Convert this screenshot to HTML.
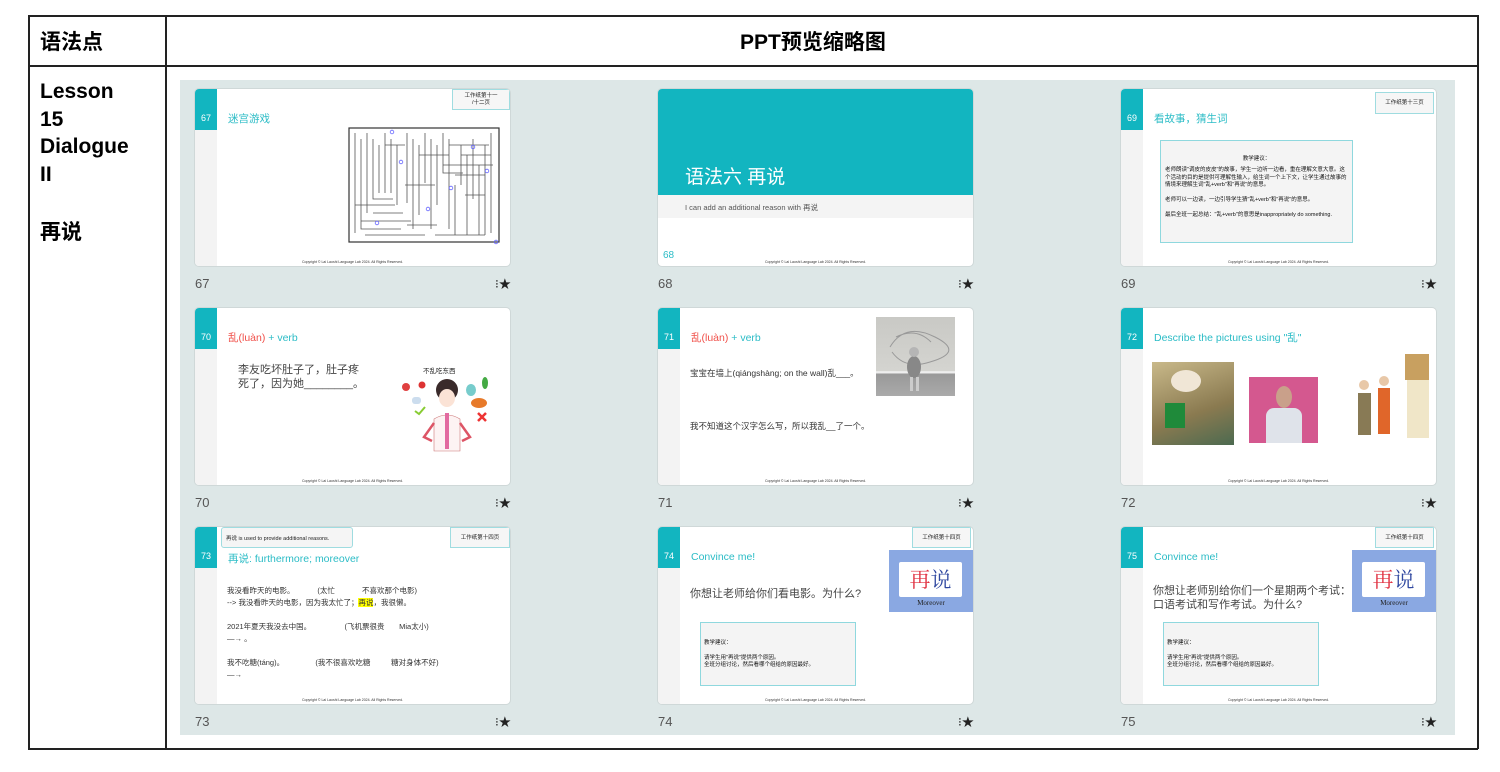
<!DOCTYPE html>
<html><head><meta charset="utf-8"><style>
*{margin:0;padding:0;box-sizing:border-box}
body{width:1500px;height:772px;background:#fff;position:relative;overflow:hidden;font-family:"Liberation Sans","Noto Sans CJK SC",sans-serif;color:#000}
.a{position:absolute}
.line{position:absolute;background:#222}
.panel{position:absolute;left:180px;top:80px;width:1275px;height:655px;background:#dde7e7}
.s{position:absolute;width:315px;height:177px;background:#fff;border-radius:4px;overflow:hidden;box-shadow:0 0 0 1px #cfd8d8}
.sb{position:absolute;left:0;top:0;width:22px;height:177px;background:#f3f3f3}
.nb{position:absolute;left:0;top:0;width:22px;height:41px;background:#12b5c0;color:#fff;font-size:9px;padding-top:24px;text-align:center}
.tt{position:absolute;left:33px;top:22px;font-size:10.5px;color:#2bbcc6;white-space:nowrap}
.cp{position:absolute;left:0;width:315px;top:171px;text-align:center;font-size:3.5px;color:#333}
.bd{position:absolute;background:#f6f6f6;border:1px solid #9fdce0;font-size:5.5px;color:#222;text-align:center;line-height:1.25}
.num{position:absolute;font-size:13px;color:#555}
.st{position:absolute;font-size:12px;color:#222}
.tx{position:absolute;font-size:8.5px;color:#333;white-space:nowrap}
.tb{position:absolute;background:#f4f4f4;border:1px solid #8fd8de;font-size:5.5px;color:#111;line-height:1.35}
</style></head><body>
<div class="line" style="left:28px;top:15px;width:1450px;height:1.5px"></div>
<div class="line" style="left:28px;top:65px;width:1450px;height:1.5px"></div>
<div class="line" style="left:28px;top:748px;width:1450px;height:1.5px"></div>
<div class="line" style="left:28px;top:15px;width:1.5px;height:734px"></div>
<div class="line" style="left:165px;top:15px;width:1.5px;height:734px"></div>
<div class="line" style="left:1477px;top:15px;width:1.5px;height:734px"></div>
<div class="a" style="left:40px;top:26px;font-size:21px;font-weight:bold">语法点</div>
<div class="a" style="left:740px;top:26px;font-size:21px;font-weight:bold">PPT预览缩略图</div>
<div class="a" style="left:40px;top:78px;font-size:21px;font-weight:bold;line-height:27.5px">Lesson<br>15<br>Dialogue<br>II</div>
<div class="a" style="left:40px;top:216px;font-size:21px;font-weight:bold">再说</div>

<div class="panel"></div>

<!-- 67 -->
<div class="s" style="left:195px;top:89px">
<div class="sb"></div><div class="nb">67</div><div class="tt">迷宫游戏</div>
<div class="bd" style="left:257px;top:0;width:58px;height:21px;padding-top:3px">工作纸第十一<br>/十二页</div>
<svg class="a" style="left:150px;top:36px" width="160" height="120" viewBox="0 0 160 120" fill="none" stroke="#555" stroke-width="0.8">
<rect x="4" y="3" width="150" height="114" stroke="#333" stroke-width="1.2"/>
<path d="M10 8v100M16 14v90h40M22 8v80M28 14v60h20M34 20v48M40 8v60M46 14v54M52 20v60M62 8v70M68 14v90M74 20v70M80 8v50M86 14v90M92 20v60M98 8v40h20M104 14v90M110 60v50M116 20v40M122 30v80M128 14v60M134 40v70M140 20v90M146 8v100"/>
<path d="M10 80h40M16 96h50M28 88h30M62 100h30M74 30h30M98 40h50M110 50h30M120 70h20M90 110h50M40 20h20M104 20h40M116 30h30M60 60h30M20 110h60"/>
<circle cx="47" cy="7" r="1.8" stroke="#66f"/><circle cx="56" cy="37" r="1.8" stroke="#66f"/><circle cx="83" cy="84" r="1.8" stroke="#66f"/><circle cx="128" cy="22" r="1.8" stroke="#66f"/><circle cx="106" cy="63" r="1.8" stroke="#66f"/><circle cx="32" cy="98" r="1.8" stroke="#66f"/><circle cx="142" cy="46" r="1.8" stroke="#66f"/><circle cx="151" cy="117" r="1.8" stroke="#66f"/>
</svg>
<div class="cp">Copyright © Lai Laoshi Language Lab 2024. All Rights Reserved.</div>
</div>
<div class="num" style="left:195px;top:276px">67</div><div class="st" style="left:495px;top:275px">⁝★</div>

<!-- 68 -->
<div class="s" style="left:658px;top:89px">
<div class="a" style="left:0;top:0;width:315px;height:106px;background:#12b5c0"></div>
<div class="a" style="left:0;top:106px;width:315px;height:23px;background:#f4f4f4"></div>
<div class="a" style="left:27px;top:73px;font-size:19px;color:#fff">语法六 再说</div>
<div class="a" style="left:27px;top:113px;font-size:7.5px;color:#555">I can add an additional reason with 再说</div>
<div class="a" style="left:5px;top:161px;font-size:10px;color:#2bbcc6">68</div>
<div class="cp">Copyright © Lai Laoshi Language Lab 2024. All Rights Reserved.</div>
</div>
<div class="num" style="left:658px;top:276px">68</div><div class="st" style="left:958px;top:275px">⁝★</div>

<!-- 69 -->
<div class="s" style="left:1121px;top:89px">
<div class="sb"></div><div class="nb">69</div><div class="tt">看故事，猜生词</div>
<div class="bd" style="left:254px;top:3px;width:59px;height:22px;padding-top:7px">工作纸第十三页</div>
<div class="tb" style="left:39px;top:51px;width:193px;height:103px;padding:15px 4px 0">
<div style="text-align:center;margin-bottom:4px">教学建议：</div>
老师朗读"调皮的皮皮"的故事，学生一边听一边看，重在理解文意大意。这个活动的目的是提供可理解性输入，给生词一个上下文，让学生通过故事的情境来理解生词"乱+verb"和"再说"的意思。<br><br>老师可以一边读，一边引导学生猜"乱+verb"和"再说"的意思。<br><br>最后全班一起总结："乱+verb"的意思是inappropriately do something.</div>
<div class="cp">Copyright © Lai Laoshi Language Lab 2024. All Rights Reserved.</div>
</div>
<div class="num" style="left:1121px;top:276px">69</div><div class="st" style="left:1421px;top:275px">⁝★</div>

<!-- 70 -->
<div class="s" style="left:195px;top:308px">
<div class="sb"></div><div class="nb">70</div><div class="tt"><span style="color:#f0504a">乱(luàn)</span> + verb</div>
<div class="a" style="left:43px;top:56px;font-size:11px;color:#444;line-height:13.5px">李友吃坏肚子了，肚子疼<br>死了，因为她________。</div>
<div class="a" style="left:228px;top:57px;font-size:6.5px;color:#222">不乱吃东西</div>
<svg class="a" style="left:205px;top:65px" width="95" height="80" viewBox="0 0 95 80">
<circle cx="6" cy="14" r="4" fill="#e04040"/><circle cx="22" cy="12" r="3.5" fill="#d33"/>
<rect x="12" y="24" width="9" height="7" rx="3" fill="#cde"/><path d="M15 38l4 3 6-7" stroke="#8c3" stroke-width="2" fill="none"/>
<ellipse cx="71" cy="17" rx="5" ry="6" fill="#7cc"/><ellipse cx="85" cy="10" rx="3" ry="6" fill="#4a4"/><ellipse cx="79" cy="30" rx="8" ry="5" fill="#e77a2a"/>
<path d="M78 40l8 8M86 40l-8 8" stroke="#e33" stroke-width="2.5"/>
<circle cx="47" cy="17" r="11" fill="#3a2a2a"/><ellipse cx="47" cy="25" rx="8" ry="9" fill="#fbe3d6"/>
<path d="M34 78V46q13-8 26 0v32z" fill="#fdf3f3" stroke="#c77" stroke-width="0.6"/><rect x="45" y="40" width="4" height="36" fill="#e26aa0"/>
<path d="M34 50l-10 14 8 4M60 50l10 14-8 4" stroke="#d56" stroke-width="2.5" fill="none"/>
</svg>
<div class="cp">Copyright © Lai Laoshi Language Lab 2024. All Rights Reserved.</div>
</div>
<div class="num" style="left:195px;top:495px">70</div><div class="st" style="left:495px;top:494px">⁝★</div>

<!-- 71 -->
<div class="s" style="left:658px;top:308px">
<div class="sb"></div><div class="nb">71</div><div class="tt"><span style="color:#f0504a">乱(luàn)</span> + verb</div>
<div class="a" style="left:218px;top:9px;width:79px;height:79px;background:linear-gradient(#c9c9c5 0%,#d4d4d0 68%,#eee 69%,#eee 71%,#999 72%,#aaa 100%)"></div>
<svg class="a" style="left:218px;top:9px" width="79" height="79"><path d="M14 30q15-25 45-10t-5 25q-25 8-38-10M20 20q20-10 35 5" stroke="#999" fill="none"/><ellipse cx="38" cy="50" rx="7" ry="11" fill="#888"/><circle cx="38" cy="35" r="5" fill="#b5b5b5"/><rect x="34" y="60" width="3" height="14" fill="#ccc"/><rect x="40" y="60" width="3" height="14" fill="#ccc"/></svg>
<div class="tx" style="left:32px;top:59px">宝宝在墙上(qiángshàng; on the wall)乱___。</div>
<div class="tx" style="left:32px;top:112px">我不知道这个汉字怎么写，所以我乱__了一个。</div>
<div class="cp">Copyright © Lai Laoshi Language Lab 2024. All Rights Reserved.</div>
</div>
<div class="num" style="left:658px;top:495px">71</div><div class="st" style="left:958px;top:494px">⁝★</div>

<!-- 72 -->
<div class="s" style="left:1121px;top:308px">
<div class="sb"></div><div class="nb">72</div><div class="tt">Describe the pictures using "乱"</div>
<div class="a" style="left:31px;top:54px;width:82px;height:83px;background:linear-gradient(160deg,#c9b98a,#8a7a50 60%,#4c6a50)"></div>
<div class="a" style="left:44px;top:95px;width:20px;height:25px;background:#1f8a3a"></div>
<div class="a" style="left:50px;top:62px;width:30px;height:22px;border-radius:50%;background:#f0e6d6"></div>
<div class="a" style="left:128px;top:69px;width:69px;height:66px;background:#d4588f"></div>
<div class="a" style="left:145px;top:100px;width:36px;height:35px;background:#dfe3ea;border-radius:8px 8px 0 0"></div>
<div class="a" style="left:155px;top:78px;width:16px;height:22px;background:#c9a08a;border-radius:50%"></div>
<div class="a" style="left:284px;top:46px;width:24px;height:26px;background:#c8a060"></div>
<div class="a" style="left:286px;top:72px;width:22px;height:58px;background:#f0e6c8"></div>
<div class="a" style="left:238px;top:72px;width:10px;height:10px;border-radius:50%;background:#e8c8a8"></div>
<div class="a" style="left:258px;top:68px;width:10px;height:10px;border-radius:50%;background:#e8c8a8"></div>
<div class="a" style="left:237px;top:85px;width:13px;height:42px;background:#887a55"></div>
<div class="a" style="left:257px;top:80px;width:12px;height:46px;background:#e0662a"></div>
<div class="cp">Copyright © Lai Laoshi Language Lab 2024. All Rights Reserved.</div>
</div>
<div class="num" style="left:1121px;top:495px">72</div><div class="st" style="left:1421px;top:494px">⁝★</div>

<!-- 73 -->
<div class="s" style="left:195px;top:527px">
<div class="sb"></div><div class="nb">73</div>
<div class="a" style="left:26px;top:0;width:132px;height:21px;background:#f5f5f5;border:1px solid #9fdce0;border-radius:3px;font-size:5.5px;padding:6px 0 0 4px;color:#222">再说 is used to provide additional reasons.</div>
<div class="bd" style="left:255px;top:0;width:60px;height:21px;padding-top:7px">工作纸第十四页</div>
<div class="tt" style="top:24px">再说: furthermore; moreover</div>
<div class="tx" style="font-size:7.5px;left:32px;top:58px;line-height:12px">我没看昨天的电影。&nbsp;&nbsp;&nbsp;&nbsp;&nbsp;&nbsp;&nbsp;&nbsp;&nbsp;&nbsp;&nbsp;(太忙&nbsp;&nbsp;&nbsp;&nbsp;&nbsp;&nbsp;&nbsp;&nbsp;&nbsp;&nbsp;&nbsp;&nbsp;&nbsp;不喜欢那个电影)<br>--&gt; 我没看昨天的电影，因为我太忙了；<span style="background:#ff0">再说</span>，我很懒。</div>
<div class="tx" style="font-size:7.5px;left:32px;top:94px;line-height:12px">2021年夏天我没去中国。&nbsp;&nbsp;&nbsp;&nbsp;&nbsp;&nbsp;&nbsp;&nbsp;&nbsp;&nbsp;&nbsp;&nbsp;&nbsp;&nbsp;&nbsp;&nbsp;(飞机票很贵&nbsp;&nbsp;&nbsp;&nbsp;&nbsp;&nbsp;&nbsp;Mia太小)<br>—→ 。</div>
<div class="tx" style="font-size:7.5px;left:32px;top:130px;line-height:12px">我不吃糖(táng)。&nbsp;&nbsp;&nbsp;&nbsp;&nbsp;&nbsp;&nbsp;&nbsp;&nbsp;&nbsp;&nbsp;&nbsp;&nbsp;&nbsp;&nbsp;(我不很喜欢吃糖&nbsp;&nbsp;&nbsp;&nbsp;&nbsp;&nbsp;&nbsp;&nbsp;&nbsp;&nbsp;糖对身体不好)<br>—→</div>
<div class="cp">Copyright © Lai Laoshi Language Lab 2024. All Rights Reserved.</div>
</div>
<div class="num" style="left:195px;top:714px">73</div><div class="st" style="left:495px;top:713px">⁝★</div>

<!-- 74 -->
<div class="s" style="left:658px;top:527px">
<div class="sb"></div><div class="nb">74</div><div class="tt" style="top:24px">Convince me!</div>
<div class="bd" style="left:254px;top:0;width:59px;height:21px;padding-top:7px">工作纸第十四页</div>
<div class="a" style="left:231px;top:23px;width:84px;height:62px;background:#8aa8e2"></div>
<div class="a" style="left:241px;top:35px;width:63px;height:35px;background:#fff;border-radius:2px;font-family:'Noto Serif CJK SC',serif;font-size:21px;line-height:35px;text-align:center"><span style="color:#e03040">再</span><span style="color:#3048a0">说</span></div>
<div class="a" style="left:231px;top:72px;width:84px;text-align:center;font-family:'Liberation Serif',serif;font-size:7px;color:#222">Moreover</div>
<div class="a" style="left:32px;top:58px;font-size:11px;color:#444">你想让老师给你们看电影。为什么?</div>
<div class="tb" style="left:42px;top:95px;width:156px;height:64px;padding:17px 3px 0">教学建议：<br><br>请学生用"再说"提供两个原因。<br>全班分组讨论，然后看哪个组给的原因最好。</div>
<div class="cp">Copyright © Lai Laoshi Language Lab 2024. All Rights Reserved.</div>
</div>
<div class="num" style="left:658px;top:714px">74</div><div class="st" style="left:958px;top:713px">⁝★</div>

<!-- 75 -->
<div class="s" style="left:1121px;top:527px">
<div class="sb"></div><div class="nb">75</div><div class="tt" style="top:24px">Convince me!</div>
<div class="bd" style="left:254px;top:0;width:59px;height:21px;padding-top:7px">工作纸第十四页</div>
<div class="a" style="left:231px;top:23px;width:84px;height:62px;background:#8aa8e2"></div>
<div class="a" style="left:241px;top:35px;width:63px;height:35px;background:#fff;border-radius:2px;font-family:'Noto Serif CJK SC',serif;font-size:21px;line-height:35px;text-align:center"><span style="color:#e03040">再</span><span style="color:#3048a0">说</span></div>
<div class="a" style="left:231px;top:72px;width:84px;text-align:center;font-family:'Liberation Serif',serif;font-size:7px;color:#222">Moreover</div>
<div class="a" style="left:32px;top:58px;font-size:11px;color:#444;line-height:13.5px">你想让老师别给你们一个星期两个考试：<br>口语考试和写作考试。为什么?</div>
<div class="tb" style="left:42px;top:95px;width:156px;height:64px;padding:17px 3px 0">教学建议：<br><br>请学生用"再说"提供两个原因。<br>全班分组讨论，然后看哪个组给的原因最好。</div>
<div class="cp">Copyright © Lai Laoshi Language Lab 2024. All Rights Reserved.</div>
</div>
<div class="num" style="left:1121px;top:714px">75</div><div class="st" style="left:1421px;top:713px">⁝★</div>
</body></html>
